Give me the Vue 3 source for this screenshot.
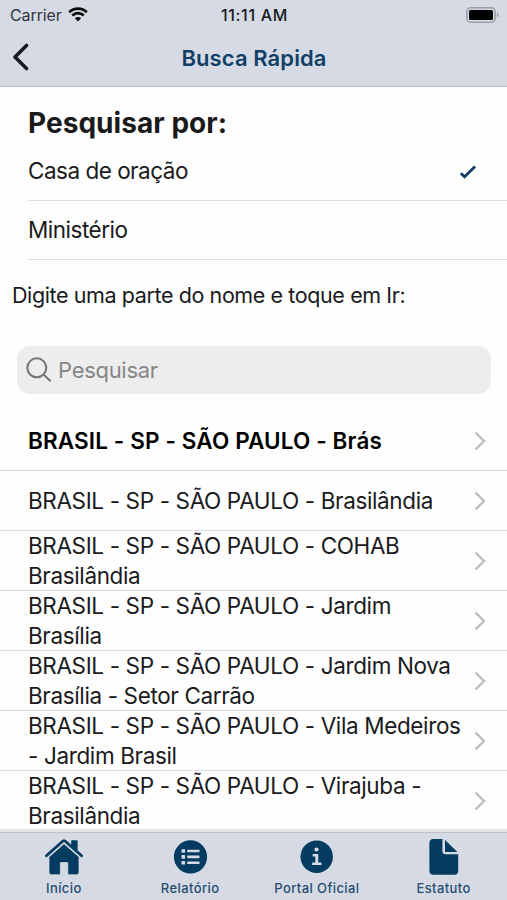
<template>
  <div class="screen">
    <header class="header">
      <div class="status-bar">
        <div class="carrier">
          <span>Carrier</span>
          <svg class="wifi" viewBox="0 0 20 15">
            <path d="M1.2 5.3a12.6 12.6 0 0 1 17.6 0" />
            <path d="M4.3 8.5a8.1 8.1 0 0 1 11.4 0" />
            <path class="wifi-dot" d="M6.9 11.2a4.4 4.4 0 0 1 6.2 0L10 14.5z" />
          </svg>
        </div>
        <span class="time">11:11 AM</span>
        <svg class="battery" viewBox="0 0 33 16">
          <rect class="battery-shell" x=".8" y=".8" width="28.4" height="14.4" rx="4" />
          <rect x="3" y="3" width="24" height="10" rx="1.5" />
          <path class="battery-tip" d="M31 5.6c2 .8 2 4 0 4.8z" />
        </svg>
      </div>
      <div class="nav-bar">
        <button class="back-btn" aria-label="Voltar">
          <svg viewBox="0 0 18 28">
            <path d="M14.5 2.5 3 14l11.5 11.5" />
          </svg>
        </button>
        <h1>Busca Rápida</h1>
      </div>
    </header>

    <main class="content">
      <h2>Pesquisar por:</h2>
      <div
        v-for="option in options"
        :key="option.value"
        class="option"
        @click="selected = option.value"
      >
        <span>{{ option.label }}</span>
        <svg v-if="selected === option.value" class="check" viewBox="0 0 18 14">
          <path d="M1.8 8.2 5.6 11.8 16 1.6" />
        </svg>
      </div>

      <p class="hint">Digite uma parte do nome e toque em Ir:</p>

      <div class="search-bar">
        <svg class="search-icon" viewBox="0 0 26 26">
          <circle cx="10.8" cy="10.8" r="9.5" />
          <path d="m17.7 17.7 7 6.6" />
        </svg>
        <input v-model="searchTerm" type="text" placeholder="Pesquisar" class="search-input" />
      </div>

      <div class="results">
        <div
          v-for="(place, index) in places"
          :key="place"
          :class="['result', { main: index === 0 }]"
        >
          <span class="result-name">{{ place }}</span>
          <svg class="chevron" viewBox="0 0 12 20">
            <path d="m1.5 1.5 8.5 8.5-8.5 8.5" />
          </svg>
        </div>
      </div>
    </main>

    <nav class="tab-bar">
      <button class="tab">
        <svg class="tab-icon" viewBox="0 0 40 38">
          <path d="M27.2 3.2q0-1 1-1h4.4q1 0 1 1V15l-6.4-5.4z" />
          <path class="roof" d="M2.4 17.8 18.7 3.2q1.3-1.1 2.6 0L37.6 17.8" />
          <path d="M5 18.9 20 5.8l15 13.1v15.3a2.6 2.6 0 0 1-2.6 2.6h-8.6V24.6h-7.4v12.2H7.6A2.6 2.6 0 0 1 5 34.2z" />
        </svg>
        <span>Início</span>
      </button>
      <button class="tab">
        <svg class="tab-icon" viewBox="0 0 40 38">
          <circle cx="20.5" cy="18.9" r="16.6" />
          <g class="light">
            <rect x="11.5" y="11.2" width="3.6" height="3.6" rx=".6" />
            <rect x="11.5" y="17.1" width="3.6" height="3.6" rx=".6" />
            <rect x="11.5" y="23" width="3.6" height="3.6" rx=".6" />
            <rect x="17.2" y="11.7" width="12.3" height="2.6" rx=".6" />
            <rect x="17.2" y="17.6" width="12.3" height="2.6" rx=".6" />
            <rect x="17.2" y="23.5" width="12.3" height="2.6" rx=".6" />
          </g>
        </svg>
        <span>Relatório</span>
      </button>
      <button class="tab">
        <svg class="tab-icon" viewBox="0 0 40 38">
          <circle cx="19.7" cy="18.7" r="16.2" />
          <g class="light">
            <circle cx="19.5" cy="11.5" r="2.1" />
            <path d="M15.7 15.9h5.5v8.5h3.2v2.7h-9.2v-2.7h3.1v-5.8h-2.6z" />
          </g>
        </svg>
        <span>Portal Oficial</span>
      </button>
      <button class="tab">
        <svg class="tab-icon" viewBox="0 0 40 38">
          <path d="M9.4 1.1h9V13a3.3 3.3 0 0 0 3.3 3.3h12.5v16.5a4 4 0 0 1-4 4H9.4a4 4 0 0 1-4-4V5.1a4 4 0 0 1 4-4z" />
          <path d="M21 1.9 33.4 14H21z" />
        </svg>
        <span>Estatuto</span>
      </button>
    </nav>
  </div>
</template>

<script setup>
import { ref } from 'vue'

const selected = ref('casa')
const searchTerm = ref('')

const options = [
  { value: 'casa', label: 'Casa de oração' },
  { value: 'ministerio', label: 'Ministério' }
]

const places = [
  'BRASIL - SP - SÃO PAULO - Brás',
  'BRASIL - SP - SÃO PAULO - Brasilândia',
  'BRASIL - SP - SÃO PAULO - COHAB Brasilândia',
  'BRASIL - SP - SÃO PAULO - Jardim Brasília',
  'BRASIL - SP - SÃO PAULO - Jardim Nova Brasília - Setor Carrão',
  'BRASIL - SP - SÃO PAULO - Vila Medeiros - Jardim Brasil',
  'BRASIL - SP - SÃO PAULO - Virajuba - Brasilândia'
]
</script>

<style>
body {
  margin: 0;
  overflow: hidden;
}
</style>

<style scoped>
.screen {
  display: flex;
  flex-direction: column;
  height: 100vh;
  overflow: hidden;
  background: #fefefe;
  color: #1a1a1c;
  font-family: Inter, "Liberation Sans", sans-serif;
}

button {
  padding: 0;
  border: none;
  background: none;
  font-family: inherit;
}

svg {
  display: block;
  flex: none;
}

.header {
  flex: none;
  box-sizing: border-box;
  height: 87px;
  background: #d5dae5;
  border-bottom: 1px solid #b9bdc6;
}

.status-bar {
  display: grid;
  grid-template-columns: 1fr auto 1fr;
  align-items: center;
  height: 29px;
  padding: 0 8px 0 10px;
  font-size: 16px;
}

.carrier {
  display: flex;
  align-items: center;
  gap: 6px;
  color: #33363c;
  letter-spacing: -0.1px;
}

.wifi {
  width: 20px;
  height: 15px;
  fill: none;
  stroke: #08090a;
  stroke-width: 2.7;
}

.wifi-dot {
  fill: #08090a;
  stroke: none;
}

.time {
  font-weight: 500;
  letter-spacing: 0.7px;
  color: #17191d;
}

.battery {
  width: 33px;
  height: 16px;
  justify-self: end;
}

.battery-shell {
  fill: none;
  stroke: #9a9da4;
  stroke-width: 1.6;
}

.battery-tip {
  fill: #9a9da4;
}

.nav-bar {
  display: grid;
  grid-template-columns: 60px 1fr 60px;
  align-items: center;
  height: 56px;
}

.back-btn {
  padding-left: 12px;
}

.back-btn svg {
  width: 18px;
  height: 28px;
  fill: none;
  stroke: #17191e;
  stroke-width: 3.6;
  stroke-linecap: round;
  stroke-linejoin: round;
}

h1 {
  margin: 0;
  padding: 2px 0 0 1px;
  text-align: center;
  font-size: 22px;
  font-weight: 600;
  letter-spacing: 0.1px;
  color: #123f66;
}

.content {
  flex: 1;
  min-height: 0;
  overflow: hidden;
}

h2 {
  margin: 0;
  padding: 15px 0 0 28px;
  height: 39px;
  line-height: 42px;
  font-size: 28px;
  font-weight: 700;
  letter-spacing: 0.05px;
}

.option {
  display: flex;
  align-items: center;
  justify-content: space-between;
  box-sizing: border-box;
  height: 59px;
  margin-left: 28px;
  padding: 0 30px 1px 0;
  border-bottom: 1px solid #dedee0;
  font-size: 22.5px;
  letter-spacing: -0.5px;
}

h2 + .option {
  height: 60px;
}

.check {
  width: 18px;
  height: 14px;
  margin-top: 3px;
  fill: none;
  stroke: #123f66;
  stroke-width: 2.8;
}

.hint {
  margin: 0;
  padding-left: 12px;
  height: 86px;
  line-height: 70px;
  font-size: 21.5px;
  letter-spacing: -0.4px;
}

.search-bar {
  display: flex;
  align-items: center;
  gap: 6px;
  box-sizing: border-box;
  height: 48px;
  margin: 0 16px 0 17px;
  padding-left: 9px;
  border-radius: 13px;
  background: #ededed;
}

.search-icon {
  width: 26px;
  height: 26px;
  fill: none;
  stroke: #757577;
  stroke-width: 2;
}

.search-input {
  flex: 1;
  padding: 0;
  border: none;
  outline: none;
  background: transparent;
  font-family: inherit;
  font-size: 22px;
  letter-spacing: -0.3px;
}

.search-input::placeholder {
  color: #858587;
}

.results {
  padding-top: 17px;
}

.result {
  display: flex;
  align-items: center;
  justify-content: space-between;
  box-sizing: border-box;
  height: 60px;
  padding: 0 21px 0 28px;
  border-bottom: 1px solid #dcdcde;
  line-height: 29.5px;
  font-size: 22.5px;
  letter-spacing: -0.37px;
}

.result-name {
  width: 438px;
}

.result.main {
  font-weight: 600;
  letter-spacing: 0.13px;
  color: #000;
}

.chevron {
  width: 12px;
  height: 20px;
  fill: none;
  stroke: #bcbcbe;
  stroke-width: 2.3;
}

.tab-bar {
  display: grid;
  grid-template-columns: repeat(4, 1fr);
  flex: none;
  box-sizing: border-box;
  height: 71px;
  border-top: 3px solid #e6e6e6;
  background: #d5dae5;
  box-shadow: inset 0 1px #bcc0c8;
}

.tab {
  display: flex;
  flex-direction: column;
  align-items: center;
  padding-top: 6px;
  font-size: 13px;
  font-weight: 500;
  letter-spacing: 0.4px;
  color: #274c70;
}

.tab:first-child {
  padding-left: 1px;
}

.tab-icon {
  width: 40px;
  height: 38px;
  margin-bottom: 4px;
  fill: #043c61;
}

.roof {
  fill: none;
  stroke: #043c61;
  stroke-width: 2.8;
  stroke-linecap: round;
}

/* separates the roof line from the walls */
.roof + path {
  stroke: #d5dae5;
  stroke-width: 0.8;
}

.light {
  fill: #d5dae5;
}
</style>
